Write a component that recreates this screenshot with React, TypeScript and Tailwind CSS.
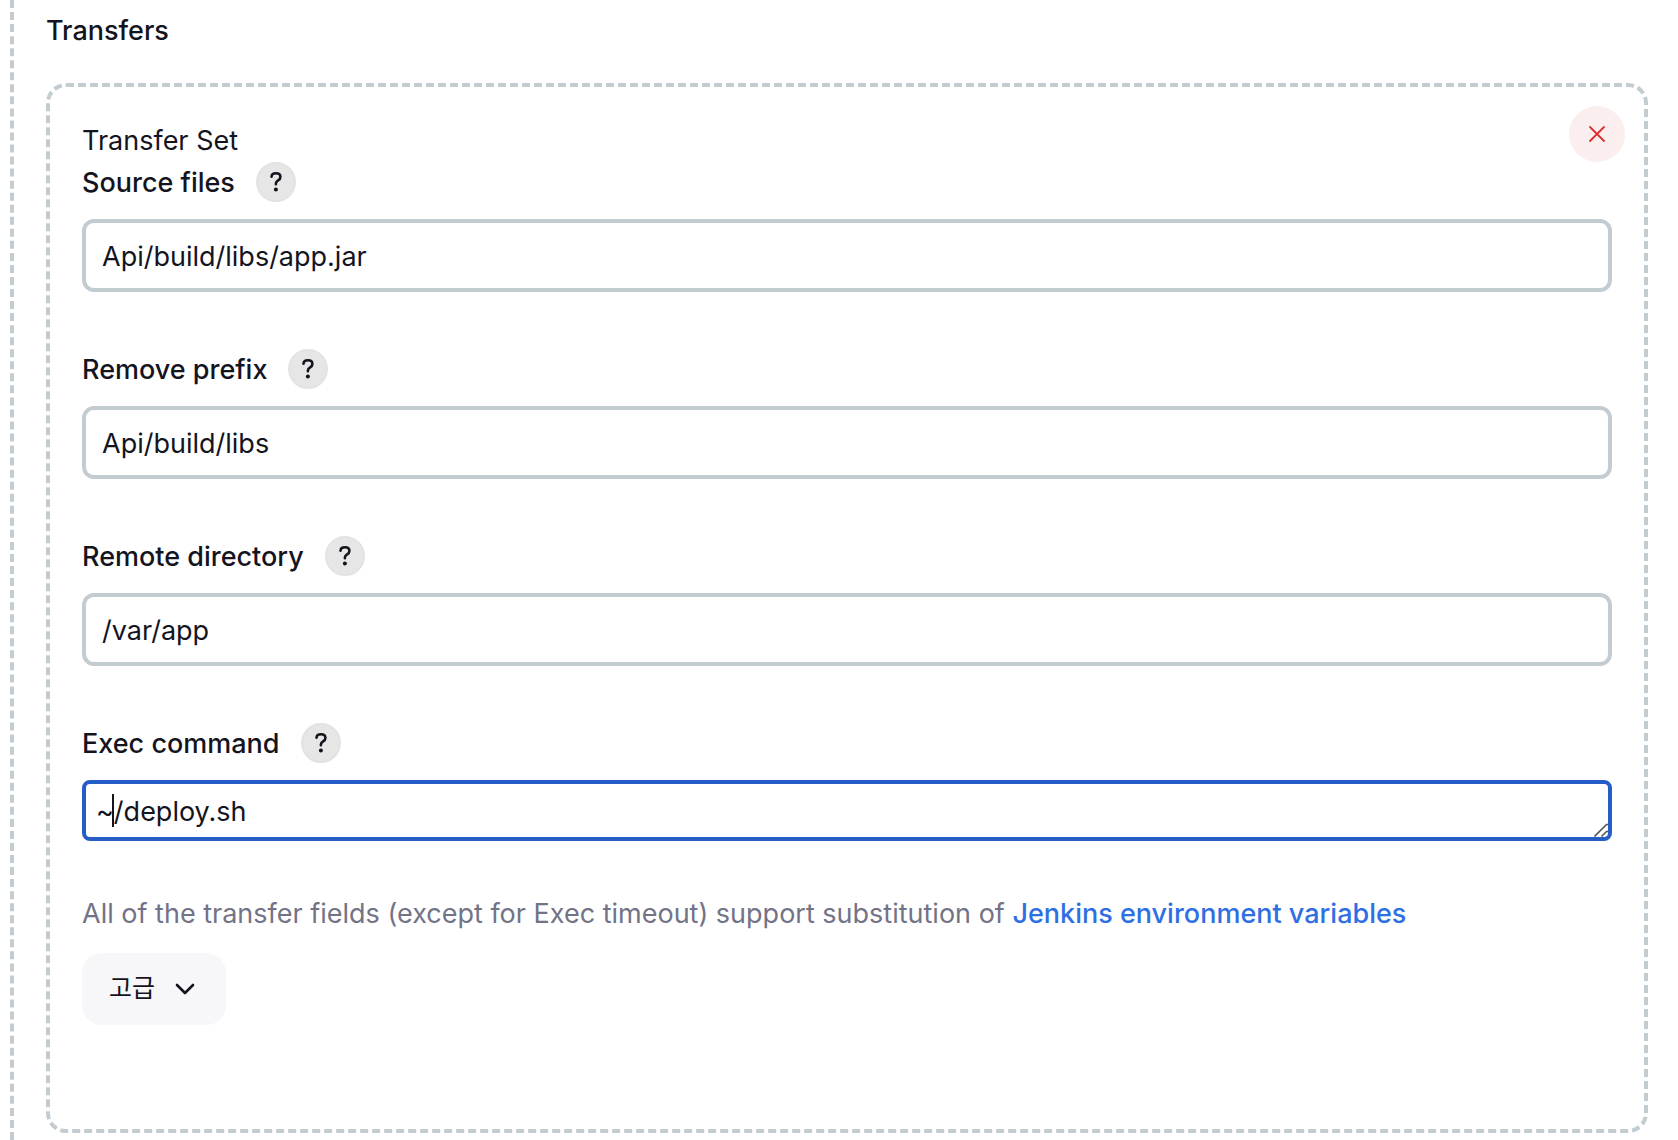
import { useState } from 'react';

interface Field {
  id: string;
  label: string;
  value: string;
}

const FIELDS: Field[] = [
  { id: 'source-files', label: 'Source files', value: 'Api/build/libs/app.jar' },
  { id: 'remove-prefix', label: 'Remove prefix', value: 'Api/build/libs' },
  { id: 'remote-directory', label: 'Remote directory', value: '/var/app' },
];

function FieldLabel({ id, label }: { id: string; label: string }) {
  return (
    <div className="flex h-10 items-center gap-[21px]">
      <label htmlFor={id} className="pt-0.5 font-medium">
        {label}
      </label>
      <button
        type="button"
        aria-label={`Help for ${label}`}
        className="flex size-10 items-center justify-center rounded-full border-2 border-[#e3e3e3] bg-[#e6e6e6]"
      >
        <svg viewBox="0 0 12 20" className="h-5 w-3" fill="none" aria-hidden="true">
          <path
            d="M1.5 4.6C1.7 2.5 3.5 1.3 6 1.3s4.4 1.3 4.4 3.6c0 1.7-.9 2.6-2.3 3.5C6.5 9.4 5.9 10.1 5.9 11.6v.6"
            stroke="#14141f"
            strokeWidth="2.6"
            strokeLinecap="round"
            strokeLinejoin="round"
          />
          <circle cx="5.9" cy="17.6" r="2" fill="#14141f" />
        </svg>
      </button>
    </div>
  );
}

function TextField({ field }: { field: Field }) {
  const [value, setValue] = useState(field.value);

  return (
    <div className="mb-[57px]">
      <FieldLabel id={field.id} label={field.label} />
      <input
        id={field.id}
        type="text"
        value={value}
        onChange={(e) => setValue(e.target.value)}
        className="mt-[17px] block h-[73px] w-full rounded-xl border-4 border-[#c3ccd0] bg-white px-4 pt-0.5 outline-none"
      />
    </div>
  );
}

function ExecCommand() {
  const [value, setValue] = useState('~/deploy.sh');

  return (
    <div>
      <FieldLabel id="exec-command" label="Exec command" />
      <div className="relative mt-[17px]">
        <textarea
          id="exec-command"
          rows={1}
          value={value}
          onChange={(e) => setValue(e.target.value)}
          className="block h-[61px] w-full resize-none overflow-hidden rounded-lg border-4 border-[#265cc6] bg-white px-2.5 pt-[7px] outline-none"
        />
        {/* text caret */}
        <span className="absolute top-3.5 left-[30px] h-[33px] w-0.5 bg-[#14141f]" />
        {/* resize grip */}
        <svg
          viewBox="0 0 14 14"
          className="absolute right-1 bottom-1 size-3.5"
          fill="none"
          stroke="#555"
          strokeWidth="1.6"
          aria-hidden="true"
        >
          <path d="M.5 13.5 12.5 1.5H14M7.5 13.5l5-5H14" />
        </svg>
      </div>
    </div>
  );
}

export default function App() {
  return (
    <main className="h-screen overflow-hidden bg-white pl-2.5 font-[Inter,'Noto_Sans_CJK_KR',sans-serif] text-[27px] leading-[42px] text-[#14141f]">
      <section className="min-h-screen border-l-4 border-dashed border-[#c3ccd0] pt-2.5 pr-[30px] pl-8">
        <h2 className="font-medium">Transfers</h2>

        <div className="relative mt-[31px] rounded-[20px] border-4 border-dashed border-[#c3ccd0] px-8 pt-[33px] pb-[104px]">
          <button
            type="button"
            aria-label="Delete transfer set"
            className="absolute top-[19px] right-[19px] flex size-14 items-center justify-center rounded-full bg-[#fbeeee]"
          >
            <svg viewBox="0 0 16 16" className="size-4" stroke="#dc2f2f" strokeWidth="1.8" strokeLinecap="round" aria-hidden="true">
              <path d="M1 1l14 14M15 1 1 15" />
            </svg>
          </button>

          <div>Transfer Set</div>
          {FIELDS.map((field) => (
            <TextField key={field.id} field={field} />
          ))}
          <ExecCommand />

          <p className="mt-[52px] text-[#737387]">
            All of the transfer fields (except for Exec timeout) support substitution of{' '}
            <a href="#variables" className="font-medium text-[#2f6fe4]">
              Jenkins environment variables
            </a>
          </p>

          <button
            type="button"
            className="mt-[18px] flex h-[72px] items-center gap-5 rounded-[20px] bg-[#f7f7f9] pr-[31px] pl-[27px] text-[25px]"
          >
            <span className="pb-0.5">고급</span>
            <svg
              viewBox="0 0 20 12"
              className="h-3 w-5"
              fill="none"
              stroke="#14141f"
              strokeWidth="2.6"
              strokeLinecap="round"
              strokeLinejoin="round"
              aria-hidden="true"
            >
              <path d="M2 2l8 8 8-8" />
            </svg>
          </button>
        </div>
      </section>
    </main>
  );
}
